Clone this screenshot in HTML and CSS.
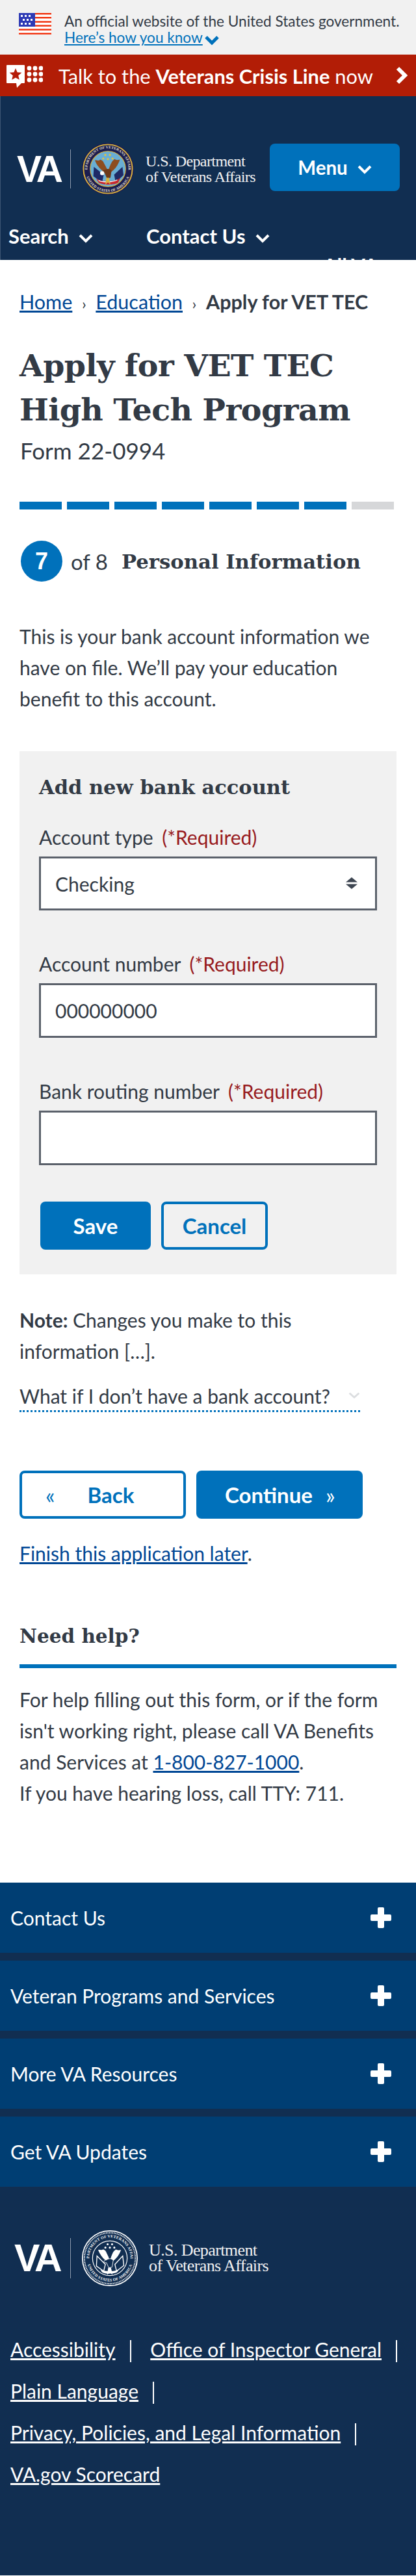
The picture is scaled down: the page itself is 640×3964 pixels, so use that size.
FILE: index.html
```html
<!DOCTYPE html>
<html lang="en">
<head>
    <meta charset="UTF-8">
    <meta name="viewport" content="width=device-width, initial-scale=1.0">
    <title>Apply for VET TEC High Tech Program</title>
    <link rel="stylesheet" href="styles.css">
</head>
<body>

<div class="gov-banner">
    <svg class="flag" viewBox="0 0 50 33">
        <rect width="50" height="33" fill="#fff"/>
        <g fill="#f1300c">
            <rect x="25" y="0" width="25" height="2.4"/>
            <rect x="25" y="6" width="25" height="2.4"/>
            <rect x="25" y="12.4" width="25" height="2.4"/>
            <rect x="25" y="18.4" width="25" height="2.4"/>
            <rect x="0" y="24.4" width="50" height="2.4"/>
            <rect x="0" y="30.6" width="50" height="2.4"/>
        </g>
        <rect width="25" height="21" fill="#2e3ab5"/>
        <g fill="#fff">
            <rect x="3" y="3" width="3" height="3"/><rect x="9" y="3" width="3" height="3"/><rect x="15" y="3" width="3" height="3"/>
            <rect x="6" y="9" width="3" height="3"/><rect x="12" y="9" width="3" height="3"/><rect x="18" y="9" width="3" height="3"/>
            <rect x="3" y="15" width="3" height="3"/><rect x="9" y="15" width="3" height="3"/><rect x="15" y="15" width="3" height="3"/>
        </g>
    </svg>
    <div class="gov-text">
        <div>An official website of the United States government.</div>
        <div><a href="#">Here’s how you know</a><svg class="know-chev" viewBox="0 0 22 16"><polyline points="2,3 11,12 20,3" fill="none" stroke="#0071bb" stroke-width="5"/></svg></div>
    </div>
</div>

<a class="crisis" href="#">
    <svg class="crisis-icon" viewBox="0 0 56 35">
        <path d="M1 0h26a1 1 0 0 1 1 1v26a1 1 0 0 1-1 1h-4l-7 7 -1-7H1a1 1 0 0 1-1-1V1a1 1 0 0 1 1-1z" fill="#fff"/>
        <polygon points="14,5 16.6,11.2 23.4,11.8 18.2,16.2 19.8,22.8 14,19.4 8.2,22.8 9.8,16.2 4.6,11.8 11.4,11.2" fill="#b51c08"/>
        <g fill="#fff">
            <circle cx="35" cy="5" r="3.4"/><circle cx="44" cy="5" r="3.4"/><circle cx="53" cy="5" r="3.4"/>
            <circle cx="35" cy="14" r="3.4"/><circle cx="44" cy="14" r="3.4"/><circle cx="53" cy="14" r="3.4"/>
            <circle cx="35" cy="23" r="3.4"/><circle cx="44" cy="23" r="3.4"/><circle cx="53" cy="23" r="3.4"/>
        </g>
    </svg>
    <span class="crisis-text">Talk to the <b>Veterans Crisis Line</b> now</span>
    <svg class="crisis-chev" viewBox="0 0 18 28"><polyline points="3,3 14,14 3,25" fill="none" stroke="#fff" stroke-width="6"/></svg>
</a>

<header class="site-header">
    <div class="logo-row">
        <span class="va-mark">VA</span>
        <span class="logo-divider"></span>
        <svg class="seal" viewBox="0 0 100 100">
            <defs>
                <path id="arcTop" d="M10.5 50a39.5 39.5 0 0 1 79 0"/>
                <path id="arcBottom" d="M6 50a44 44 0 0 0 88 0"/>
            </defs>
            <circle cx="50" cy="50" r="50" fill="#1b1d50"/>
            <circle cx="50" cy="50" r="47" fill="none" stroke="#d9b23e" stroke-width="2.4"/>
            <circle cx="50" cy="50" r="34" fill="#69aed4" stroke="#d9b23e" stroke-width="1.4"/>
            <text class="seal-text" fill="#e8e4d0"><textPath href="#arcTop" startOffset="50%" text-anchor="middle">DEPARTMENT OF VETERANS AFFAIRS</textPath></text>
            <text class="seal-text" fill="#e8e4d0"><textPath href="#arcBottom" startOffset="50%" text-anchor="middle">UNITED STATES OF AMERICA</textPath></text>
            <g fill="#e6c23a"><circle cx="45" cy="23" r="2"/><circle cx="54" cy="23" r="2"/><circle cx="41" cy="30" r="2"/><circle cx="50" cy="31" r="2"/><circle cx="59" cy="30" r="2"/></g>
            <polygon points="23,46 42,61 39,76 22,64" fill="#1e2a66"/>
            <polygon points="78,46 62,61 65,76 80,62" fill="#1e2a66"/>
            <path d="M48 58C40 55 30 47 25 33c6 0 8 2 10-1 2 1 5 2 6 4 2 5 6 10 8 16z" fill="#8d4d20"/>
            <path d="M52 58c7-3 17-12 21-26-5 1-8 1-10-1-2 2-4 3-5 5-3 5-5 10-7 16z" fill="#8d4d20"/>
            <path d="M44 52c4-3 10-3 13 1l-2 14-7 1-4-10-7 1c0-4 3-7 7-7z" fill="#6d3a1a"/>
            <circle cx="39" cy="58" r="4" fill="#fff"/>
            <path d="M27 68c8 7 36 9 47-1l-4 9c-6 5-30 6-38 0z" fill="#c8262c"/>
            <path d="M32 72c8 4 28 4 36-1" fill="none" stroke="#fff" stroke-width="1.6"/>
            <path d="M47 67l-2 14 5-6 5 6-3-14z" fill="#d9b23e"/>
        </svg>
        <span class="dept-name">U.S. Department<br>of Veterans Affairs</span>
        <button class="menu-btn" type="button">Menu<svg class="nav-chev" viewBox="0 0 22 16"><polyline points="2,3 11,12 20,3" fill="none" stroke="#fff" stroke-width="4"/></svg></button>
    </div>
    <nav class="nav-row">
        <span class="nav-item nav-search">Search<svg class="nav-chev" viewBox="0 0 22 16"><polyline points="2,3 11,12 20,3" fill="none" stroke="#fff" stroke-width="4"/></svg></span>
        <span class="nav-item">Contact Us<svg class="nav-chev" viewBox="0 0 22 16"><polyline points="2,3 11,12 20,3" fill="none" stroke="#fff" stroke-width="4"/></svg></span>
    </nav>
    <div class="nav-more">All VA.gov</div>
</header>

<main class="content">
    <nav class="breadcrumb">
        <a href="#">Home</a><span class="crumb-sep">›</span><a href="#">Education</a><span class="crumb-sep">›</span><b>Apply for VET TEC</b>
    </nav>

    <h1>Apply for VET TEC High Tech Program</h1>
    <div class="form-number">Form 22-0994</div>

    <div class="progress">
        <span class="seg done"></span>
        <span class="seg done"></span>
        <span class="seg done"></span>
        <span class="seg done"></span>
        <span class="seg done"></span>
        <span class="seg done"></span>
        <span class="seg done"></span>
        <span class="seg"></span>
    </div>

    <div class="step-row">
        <span class="step-num">7</span>
        <span class="step-of">of 8</span>
        <h2 class="step-title">Personal Information</h2>
    </div>

    <p class="intro">This is your bank account information we have on file. We’ll pay your education benefit to this account.</p>

    <form class="bank-card">
        <h3>Add new bank account</h3>

        <div class="field first">
            <label for="accountType">Account type <span class="req">(*Required)</span></label>
            <div class="select-wrap">
                <select id="accountType">
                    <option>Checking</option>
                    <option>Savings</option>
                </select>
                <svg class="select-arrows" viewBox="0 0 18 18"><polygon points="9,0 18,7.5 0,7.5" fill="#3d4551"/><polygon points="0,10.5 18,10.5 9,18" fill="#3d4551"/></svg>
            </div>
        </div>

        <div class="field">
            <label for="accountNumber">Account number <span class="req">(*Required)</span></label>
            <input type="text" id="accountNumber" value="000000000">
        </div>

        <div class="field">
            <label for="routing">Bank routing number <span class="req">(*Required)</span></label>
            <input type="text" id="routing">
        </div>

        <div class="card-buttons">
            <button class="btn btn-primary btn-save" type="button">Save</button>
            <button class="btn btn-outline btn-cancel" type="button">Cancel</button>
        </div>
    </form>

    <p class="note"><b>Note:</b> Changes you make to this information […].</p>

    <div class="what-if">
        <span>What if I don’t have a bank account?</span>
        <svg viewBox="0 0 22 12"><polyline points="2,2 11,10 20,2" fill="none" stroke="#dcdee0" stroke-width="3.5"/></svg>
    </div>

    <div class="form-nav">
        <button class="btn btn-outline nav-back" type="button"><span class="dbl">«</span><span>Back</span></button>
        <button class="btn btn-primary nav-continue" type="button"><span>Continue</span><span class="dbl">»</span></button>
    </div>

    <p class="finish"><a href="#">Finish this application later</a>.</p>

    <h2 class="help-title">Need help?</h2>
    <p class="help-text">For help filling out this form, or if the form isn't working right, please call VA Benefits and Services at <a href="#">1-800-827-1000</a>.<br>If you have hearing loss, call TTY: 711.</p>
</main>

<footer class="site-footer">
    <div class="foot-row"><span>Contact Us</span><svg class="plus" viewBox="0 0 32 32"><path d="M13 0h6a2 2 0 0 1 2 2v9h9a2 2 0 0 1 2 2v6a2 2 0 0 1-2 2h-9v9a2 2 0 0 1-2 2h-6a2 2 0 0 1-2-2v-9H2a2 2 0 0 1-2-2v-6a2 2 0 0 1 2-2h9V2a2 2 0 0 1 2-2z" fill="#fff"/></svg></div>
    <div class="foot-row"><span>Veteran Programs and Services</span><svg class="plus" viewBox="0 0 32 32"><path d="M13 0h6a2 2 0 0 1 2 2v9h9a2 2 0 0 1 2 2v6a2 2 0 0 1-2 2h-9v9a2 2 0 0 1-2 2h-6a2 2 0 0 1-2-2v-9H2a2 2 0 0 1-2-2v-6a2 2 0 0 1 2-2h9V2a2 2 0 0 1 2-2z" fill="#fff"/></svg></div>
    <div class="foot-row"><span>More VA Resources</span><svg class="plus" viewBox="0 0 32 32"><path d="M13 0h6a2 2 0 0 1 2 2v9h9a2 2 0 0 1 2 2v6a2 2 0 0 1-2 2h-9v9a2 2 0 0 1-2 2h-6a2 2 0 0 1-2-2v-9H2a2 2 0 0 1-2-2v-6a2 2 0 0 1 2-2h9V2a2 2 0 0 1 2-2z" fill="#fff"/></svg></div>
    <div class="foot-row"><span>Get VA Updates</span><svg class="plus" viewBox="0 0 32 32"><path d="M13 0h6a2 2 0 0 1 2 2v9h9a2 2 0 0 1 2 2v6a2 2 0 0 1-2 2h-9v9a2 2 0 0 1-2 2h-6a2 2 0 0 1-2-2v-9H2a2 2 0 0 1-2-2v-6a2 2 0 0 1 2-2h9V2a2 2 0 0 1 2-2z" fill="#fff"/></svg></div>

    <div class="foot-logo">
        <span class="va-mark">VA</span>
        <span class="logo-divider"></span>
        <svg class="seal seal-white" viewBox="0 0 100 100">
            <defs>
                <path id="arcTop2" d="M13 50a37 37 0 0 1 74 0"/>
                <path id="arcBottom2" d="M8.5 50a41.5 41.5 0 0 0 83 0"/>
            </defs>
            <circle cx="50" cy="50" r="49" fill="#112e51" stroke="#fff" stroke-width="2"/>
            <circle cx="50" cy="50" r="45.5" fill="none" stroke="#fff" stroke-width="2.4" stroke-dasharray="1.4 1.4"/>
            <circle cx="50" cy="50" r="31" fill="#112e51" stroke="#fff" stroke-width="1.4"/>
            <text class="seal-text" fill="#fff"><textPath href="#arcTop2" startOffset="50%" text-anchor="middle">DEPARTMENT OF VETERANS AFFAIRS</textPath></text>
            <text class="seal-text" fill="#fff"><textPath href="#arcBottom2" startOffset="50%" text-anchor="middle">UNITED STATES OF AMERICA</textPath></text>
            <g fill="#fff"><circle cx="46" cy="25" r="1.8"/><circle cx="54" cy="25" r="1.8"/><circle cx="42" cy="31" r="1.8"/><circle cx="50" cy="31" r="1.8"/><circle cx="58" cy="31" r="1.8"/></g>
            <path d="M48 58C41 54 33 46 29 35c5 0 7 1 9-1 2 1 4 2 5 4 2 5 5 9 6 14z" fill="#fff"/>
            <path d="M52 58c6-4 14-11 18-23-4 1-7 1-9-1-2 2-4 3-5 5-2 4-4 9-5 13z" fill="#fff"/>
            <path d="M44 53c4-3 10-3 12 1l-2 12-6 1-4-9-5 0c0-3 2-5 5-5z" fill="#112e51" stroke="#fff" stroke-width="1"/>
            <path d="M27 46l15 15-3 12-13-9zM73 46L59 61l3 12 13-10z" fill="none" stroke="#fff" stroke-width="1.6"/>
            <path d="M33 70c6 4 28 5 34-1l-4 6c-6 3-21 4-27 0z" fill="#fff"/>
            <path d="M47 67l-2 13 5-5 5 5-3-13z" fill="#fff"/>
        </svg>
        <span class="dept-name">U.S. Department<br>of Veterans Affairs</span>
    </div>

    <ul class="foot-links">
        <li><a href="#">Accessibility</a></li>
        <li><a href="#">Office of Inspector General</a></li>
        <li><a href="#">Plain Language</a></li>
        <li><a href="#">Privacy, Policies, and Legal Information</a></li>
        <li class="last"><a href="#">VA.gov Scorecard</a></li>
    </ul>
</footer>

</body>
</html>
```

FILE: styles.css
```css
* {
    box-sizing: border-box;
}
body {
    margin: 0;
    font-family: Lato, "Noto Sans", sans-serif;
    font-size: 30px;
    line-height: 48px;
    color: #323a45;
    background: #fff;
}
a {
    color: #004795;
}
p, h1, h2, h3 {
    margin: 0;
}
button, select, input {
    font-family: inherit;
}

/* top banners */
.gov-banner {
    display: flex;
    height: 84px;
    background: #f1f1f1;
    padding: 20px 0 0 29px;
}
.flag {
    width: 50px;
    height: 33px;
    flex: none;
}
.gov-text {
    margin: 0 0 0 20px;
    font-size: 22.6px;
    line-height: 25px;
    white-space: nowrap;
}
.gov-text a {
    color: #0071bb;
}
.know-chev {
    width: 22px;
    height: 16px;
    margin-left: 3px;
    vertical-align: -4px;
}
.crisis {
    display: flex;
    align-items: center;
    height: 64px;
    background: #b21d06;
    color: #fff;
    text-decoration: none;
    padding: 0 13px 0 10px;
}
.crisis-icon {
    width: 56px;
    height: 35px;
    flex: none;
    margin-top: 2px;
}
.crisis-text {
    margin-left: 24px;
    font-size: 30.8px;
    line-height: 64px;
    margin-top: 3px;
    white-space: nowrap;
}
.crisis-chev {
    width: 18px;
    height: 28px;
    margin-left: auto;
}

/* header */
.site-header {
    height: 252px;
    overflow: hidden;
    background: #112e51;
    color: #fff;
    border-left: 1px solid #3d5674;
}
.logo-row {
    display: flex;
    align-items: center;
    height: 80px;
    margin-top: 72px;
    padding-left: 25px;
}
.va-mark {
    font-family: "Liberation Sans", sans-serif;
    font-weight: 700;
    font-size: 57px;
    line-height: 60px;
    letter-spacing: -4px;
    color: #fff;
    width: 66px;
}
.logo-divider {
    width: 1px;
    height: 60px;
    margin-left: 16px;
    background: #8c9bae;
}
.seal {
    width: 80px;
    height: 80px;
    flex: none;
    margin-left: 17px;
}
.seal-text {
    font-family: "Liberation Serif", serif;
    font-weight: 700;
    font-size: 7px;
    letter-spacing: 0.2px;
}
.dept-name {
    font-family: "Liberation Serif", serif;
    font-size: 24px;
    line-height: 24px;
    letter-spacing: -0.6px;
    margin-left: 18px;
    white-space: nowrap;
    color: #f1f1f1;
    width: 172px;
}
.menu-btn {
    width: 200px;
    height: 73px;
    margin-left: 19px;
    margin-top: -6px;
    border: none;
    border-radius: 8px;
    background: #0071bb;
    color: #fff;
    font-size: 29.5px;
    font-weight: 700;
}
.nav-chev {
    width: 22px;
    height: 16px;
    margin-left: 15px;
}
.nav-row {
    display: flex;
    margin-top: 38px;
    padding-left: 12px;
}
.nav-item {
    font-size: 31px;
    font-weight: 700;
    line-height: 50px;
    white-space: nowrap;
}
.nav-search {
    width: 212px;
}
.nav-more {
    font-size: 31px;
    font-weight: 700;
    line-height: 40px;
    margin-left: 496px;
    white-space: nowrap;
}

/* main column */
.content {
    padding: 44px 30px 114px;
}
.breadcrumb {
    height: 40px;
    font-size: 30.5px;
    line-height: 40px;
    white-space: nowrap;
}
.crumb-sep {
    display: inline-block;
    width: 36px;
    text-align: center;
    font-size: 24px;
}
h1 {
    margin-top: 44px;
    font-family: "DejaVu Serif", serif;
    font-weight: 700;
    font-size: 47.5px;
    line-height: 68px;
    letter-spacing: -0.6px;
    width: 560px;
}
.form-number {
    margin-top: 5px;
    font-size: 35px;
    line-height: 48px;
    padding-left: 1px;
}
.progress {
    display: flex;
    gap: 8px;
    margin-top: 55px;
    width: 576px;
}
.seg {
    width: 65px;
    height: 12px;
    background: #d6d7d9;
}
.seg.done {
    background: #0071bb;
}
.step-row {
    display: flex;
    align-items: center;
    margin-top: 48px;
    padding-left: 2px;
}
.step-num {
    width: 64px;
    height: 63px;
    border-radius: 50%;
    background: #0071bb;
    color: #fff;
    font-family: "Liberation Sans", sans-serif;
    font-weight: 700;
    font-size: 36px;
    line-height: 63px;
    text-align: center;
}
.step-of {
    margin-left: 13px;
    font-size: 33px;
    width: 78px;
}
.step-title {
    font-family: "DejaVu Serif", serif;
    font-size: 30.7px;
    line-height: 40px;
    white-space: nowrap;
}
.intro {
    margin-top: 60px;
    width: 570px;
}

/* bank account card */
.bank-card {
    margin-top: 57px;
    padding: 35px 30px 38px;
    background: #f1f1f1;
}
h3, .help-title {
    font-family: "DejaVu Serif", serif;
    font-weight: 700;
    font-size: 30.5px;
    line-height: 40px;
}
.field {
    margin-top: 62px;
}
.field.first {
    margin-top: 37px;
}
label {
    display: block;
    margin-bottom: 10px;
    line-height: 40px;
    white-space: nowrap;
}
.req {
    margin-left: 6px;
    color: #981b1e;
}
.select-wrap {
    position: relative;
}
select, input {
    display: block;
    width: 100%;
    height: 84px;
    padding: 0 22px;
    border: 3px solid #5b616b;
    border-radius: 0;
    background: #fff;
    color: #323a45;
    font-size: 30px;
    appearance: none;
}
select {
    height: 83px;
}
.select-arrows {
    position: absolute;
    right: 30px;
    top: 32px;
    width: 18px;
    height: 18px;
}
.card-buttons {
    display: flex;
    gap: 16px;
    margin-top: 56px;
    padding-left: 2px;
}
.btn {
    height: 74px;
    border-radius: 8px;
    font-size: 33px;
    font-weight: 700;
}
.btn-primary {
    border: none;
    background: #0071bb;
    color: #fff;
}
.btn-outline {
    border: 4px solid #0071bb;
    background: transparent;
    color: #0071bb;
}
.btn-save {
    width: 170px;
}
.btn-cancel {
    width: 164px;
}

.note {
    margin-top: 46px;
    width: 500px;
}
.what-if {
    display: flex;
    justify-content: space-between;
    align-items: center;
    width: 524px;
    height: 47px;
    margin-top: 23px;
    border-bottom: 3px dotted #0071bb;
    white-space: nowrap;
}
.what-if svg {
    width: 18px;
    height: 10px;
    margin-top: -2px;
}
.form-nav {
    display: flex;
    gap: 16px;
    margin-top: 90px;
}
.form-nav .btn {
    display: flex;
    align-items: center;
    width: 256px;
}
.nav-back {
    padding-left: 36px;
}
.nav-back span:last-child {
    margin-left: 50px;
}
.nav-continue {
    padding-left: 44px;
}
.nav-continue .dbl {
    margin-left: 20px;
}
.dbl {
    font-weight: 400;
    font-size: 34px;
}
.finish {
    margin-top: 29px;
}
.help-title {
    margin-top: 84px;
    padding-bottom: 23px;
    border-bottom: 6px solid #0071bb;
    font-size: 29.5px;
}
.help-text {
    margin-top: 24px;
}

/* footer */
.site-footer {
    background: #112e51;
    color: #fff;
    padding-bottom: 124px;
}
.foot-row {
    display: flex;
    justify-content: space-between;
    align-items: center;
    height: 108px;
    margin-bottom: 12px;
    padding: 0 38px 0 16px;
    background: #003e73;
    font-size: 30px;
}
.plus {
    width: 32px;
    height: 32px;
}
.foot-logo {
    display: flex;
    align-items: center;
    height: 86px;
    margin-top: 67px;
}
.foot-logo .va-mark {
    margin-left: 22px;
    font-size: 59px;
    width: 69px;
}
.foot-logo .logo-divider {
    height: 62px;
    margin-left: 17px;
}
.foot-logo .seal {
    width: 86px;
    height: 86px;
}
.foot-logo .dept-name {
    font-size: 26px;
    margin-left: 17px;
}
.foot-links {
    list-style: none;
    margin: 65px 0 0;
    padding: 0 0 0 16px;
    font-size: 30px;
    line-height: 64px;
}
.foot-links li {
    display: inline-block;
    white-space: nowrap;
}
.foot-links a {
    color: #fff;
}
.foot-links li::after {
    content: "";
    display: inline-block;
    width: 2px;
    height: 34px;
    margin: 0 22px;
    background: #fff;
    vertical-align: -8px;
}
.foot-links li.last::after {
    display: none;
}
```
